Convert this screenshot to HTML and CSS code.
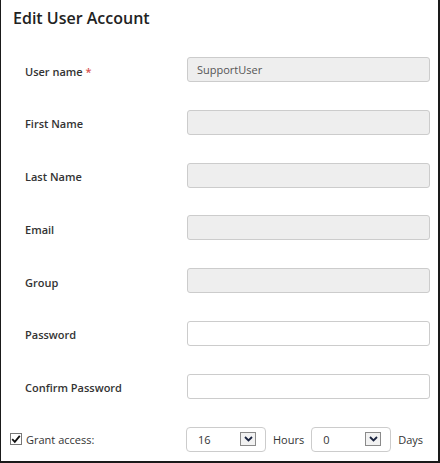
FILE: index.html
```html
<!DOCTYPE html>
<html>
<head>
<meta charset="utf-8">
<link rel="stylesheet" href="styles.css">
</head>
<body>
<div class="panel">
  <h1 class="title">Edit User Account</h1>
  <div class="form">
    <div class="row"><label class="lbl">User name <span class="req">*</span></label><div class="input disabled">SupportUser</div></div>
    <div class="row"><label class="lbl">First Name</label><div class="input disabled"></div></div>
    <div class="row"><label class="lbl">Last Name</label><div class="input disabled"></div></div>
    <div class="row"><label class="lbl">Email</label><div class="input disabled"></div></div>
    <div class="row"><label class="lbl">Group</label><div class="input disabled"></div></div>
    <div class="row"><label class="lbl">Password</label><div class="input"></div></div>
    <div class="row"><label class="lbl">Confirm Password</label><div class="input"></div></div>
  </div>
  <div class="grant">
    <div class="grant-left">
      <span class="check"><svg width="10" height="10" viewBox="0 0 10 10"><path d="M1.2 5.2 L3.8 7.8 L8.8 1.8" fill="none" stroke="#111" stroke-width="1.8"/></svg></span>
      <span class="grant-text">Grant access:</span>
    </div>
    <div class="sel"><span class="sel-val">16</span><span class="arrow"><svg width="9" height="6" viewBox="0 0 9 6"><path d="M1 1 L4.5 4.5 L8 1" fill="none" stroke="#1a2440" stroke-width="1.8"/></svg></span></div>
    <span class="unit">Hours</span>
    <div class="sel"><span class="sel-val">0</span><span class="arrow"><svg width="9" height="6" viewBox="0 0 9 6"><path d="M1 1 L4.5 4.5 L8 1" fill="none" stroke="#1a2440" stroke-width="1.8"/></svg></span></div>
    <span class="unit">Days</span>
  </div>
</div>
</body>
</html>
```
FILE: styles.css
```css
html, body {
  margin: 0;
  padding: 0;
  background: #fff;
}
body {
  font-family: "Open Sans", "Liberation Sans", sans-serif;
  color: #333;
}
.panel {
  box-sizing: border-box;
  width: 440px;
  height: 463px;
  border-left: 1px solid #1a1a1a;
  border-right: 2px solid #1a1a1a;
  border-bottom: 2px solid #1a1a1a;
  padding: 6px 8px 0 0;
}
.title {
  margin: 0 0 0 12px;
  font-size: 16px;
  font-weight: 600;
  line-height: 24px;
  color: #222;
}
.form {
  display: flex;
  flex-direction: column;
  gap: 27.8px;
  margin-top: 27px;
}
.row {
  display: flex;
  align-items: center;
  height: 25px;
}
.lbl {
  flex: 0 0 186px;
  padding-left: 24px;
  box-sizing: border-box;
  font-size: 11px;
  font-weight: 600;
  color: #333;
  padding-top: 3px;
}
.req {
  color: #d9534f;
}
.input {
  flex: 0 0 243px;
  box-sizing: border-box;
  height: 25px;
  border: 1px solid #ccc;
  border-radius: 3px;
  background: #fff;
  font-size: 11px;
  color: #555;
  padding: 0 9px;
  line-height: 23px;
}
.input.disabled {
  background: #eee;
}
.grant {
  display: flex;
  align-items: center;
  height: 25px;
  margin-top: 28px;
  font-size: 11px;
}
.grant-left {
  flex: 0 0 185px;
  display: flex;
  align-items: center;
  padding-left: 9px;
  box-sizing: border-box;
}
.check {
  flex: 0 0 12px;
  box-sizing: border-box;
  width: 12px;
  height: 12px;
  border: 1px solid #777;
  background: #fff;
  display: flex;
  align-items: center;
  justify-content: center;
  margin-right: 4px;
}
.grant-text {
  color: #333;
}
.sel {
  flex: 0 0 80px;
  box-sizing: border-box;
  height: 25px;
  border: 1px solid #ccc;
  border-radius: 4px;
  display: flex;
  align-items: center;
  justify-content: space-between;
  padding: 0 9px 0 11px;
  color: #333;
}
.arrow {
  box-sizing: border-box;
  width: 16px;
  height: 14px;
  border: 1px solid #8a8a8a;
  background: #f2f2f2;
  display: flex;
  align-items: center;
  justify-content: center;
}
.unit {
  margin: 0 7px;
  color: #333;
  white-space: nowrap;
}
```
